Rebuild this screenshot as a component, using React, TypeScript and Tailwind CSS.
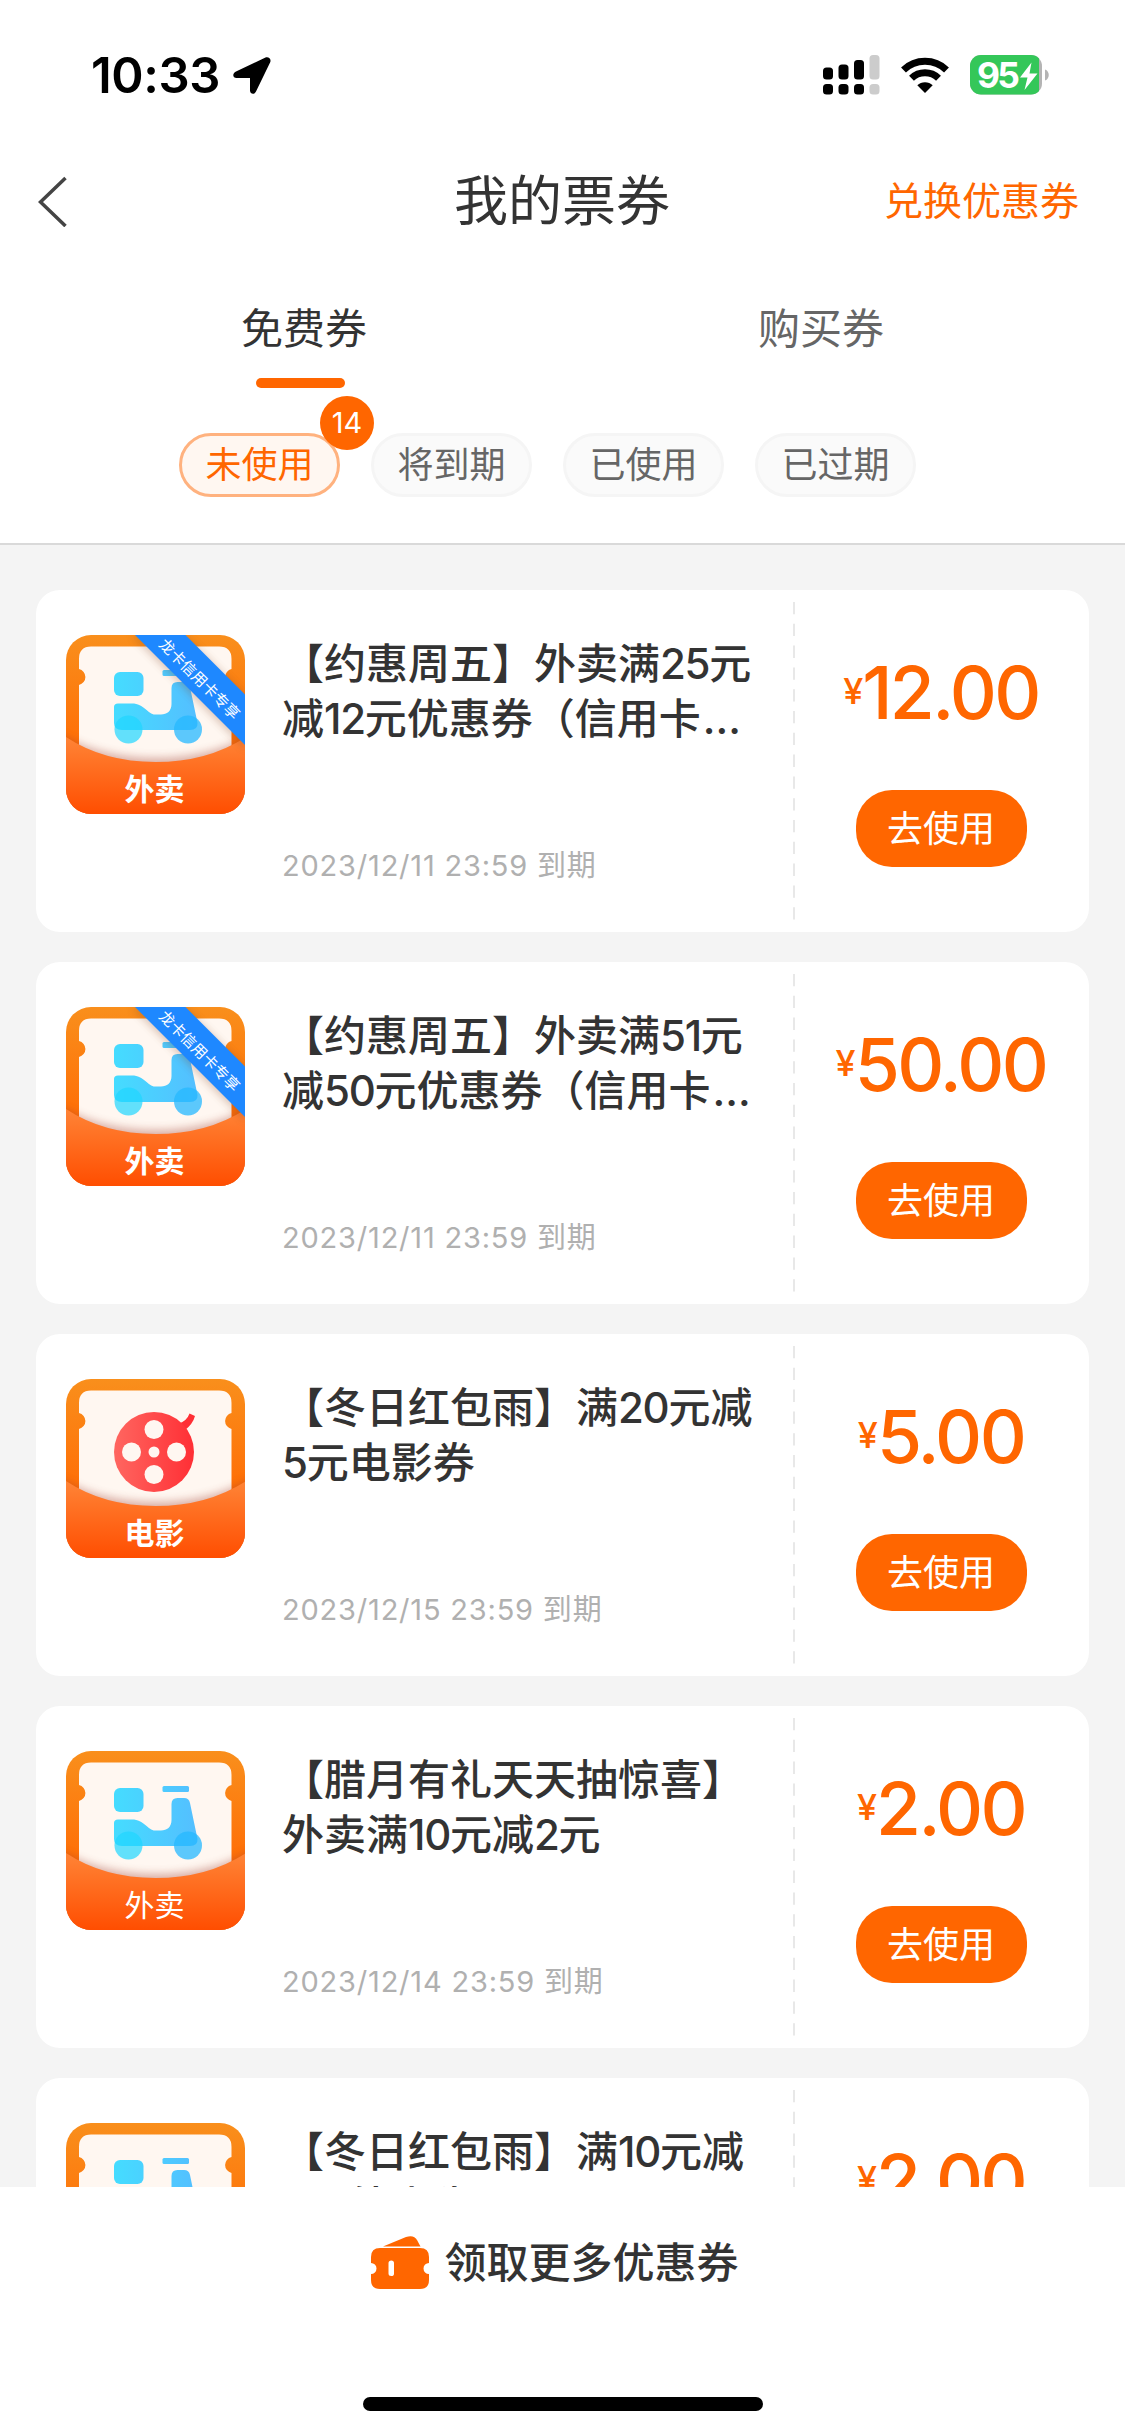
type Coupon = {
  title: [string, string];
  expires: string;
  price: string;
  kind: "takeout" | "movie";
  label: string;
  ribbon?: string;
  boldLabel?: boolean;
};

const coupons: Coupon[] = [
  {
    title: ["【约惠周五】外卖满25元", "减12元优惠券（信用卡…"],
    expires: "2023/12/11 23:59 到期",
    price: "12.00",
    kind: "takeout",
    label: "外卖",
    ribbon: "龙卡信用卡专享",
    boldLabel: true,
  },
  {
    title: ["【约惠周五】外卖满51元", "减50元优惠券（信用卡…"],
    expires: "2023/12/11 23:59 到期",
    price: "50.00",
    kind: "takeout",
    label: "外卖",
    ribbon: "龙卡信用卡专享",
    boldLabel: true,
  },
  {
    title: ["【冬日红包雨】满20元减", "5元电影券"],
    expires: "2023/12/15 23:59 到期",
    price: "5.00",
    kind: "movie",
    label: "电影",
    boldLabel: true,
  },
  {
    title: ["【腊月有礼天天抽惊喜】", "外卖满10元减2元"],
    expires: "2023/12/14 23:59 到期",
    price: "2.00",
    kind: "takeout",
    label: "外卖",
  },
  {
    title: ["【冬日红包雨】满10元减", "2元外卖券"],
    expires: "2023/12/15 23:59 到期",
    price: "2.00",
    kind: "takeout",
    label: "外卖",
  },
];

const filters = ["未使用", "将到期", "已使用", "已过期"];

function StatusBar() {
  return (
    <div className="flex h-[150px] items-center justify-between pr-[76px] pl-[91px]">
      <div className="flex items-center gap-[13px]">
        <span className="text-[49px] leading-none font-semibold tracking-[-0.4px] text-black">
          10:33
        </span>
        <svg width="38" height="37" viewBox="0 0 38 37">
          <path d="M32 .8 3 14.500C-1 16.600-.4 20.800 3.600 21H17V33.500C17.200 37.300 21.500 38 23 34.500L37.200 5.200C38.600 2 35.400-.8 32 .8Z" />
        </svg>
      </div>
      <div className="flex items-center gap-5">
        <svg width="57" height="40" viewBox="0 0 57 40">
          <rect x="0" y="12.500" width="10" height="12" rx="3.500" />
          <rect x="15.500" y="9.500" width="10" height="15" rx="3.500" />
          <rect x="31" y="5" width="10" height="19.500" rx="3.500" />
          <rect x="46.500" y="0" width="10" height="24.500" rx="3.500" fill="#ccc" />
          <rect x="0" y="29" width="10" height="10.500" rx="3.500" />
          <rect x="15.500" y="29" width="10" height="10.500" rx="3.500" />
          <rect x="31" y="29" width="10" height="10.500" rx="3.500" />
          <rect x="46.500" y="29" width="10" height="10.500" rx="3.500" fill="#ccc" />
        </svg>
        <svg width="50" height="36" viewBox="0 0 50 36">
          <path d="M3.500 13A31 31 0 0 1 46.500 13" fill="none" stroke="#000" strokeWidth="7" />
          <path d="M11.500 21.300A19.500 19.500 0 0 1 38.500 21.300" fill="none" stroke="#000" strokeWidth="7" />
          <path d="M25 36 17.300 28.300A11 11 0 0 1 32.700 28.300Z" />
        </svg>
        <svg width="79" height="40" viewBox="0 0 79 40">
          <defs>
            <clipPath id="battery">
              <rect width="72" height="39.500" rx="11" />
            </clipPath>
          </defs>
          <g clipPath="url(#battery)">
            <rect width="72" height="40" fill="#b4b4b4" />
            <rect width="69" height="40" fill="#34c759" />
          </g>
          <path d="M75 14.500C80 16 80 24 75 25.500Z" fill="#b4b4b4" />
          <text x="7" y="32.800" fontSize="35.500" fontWeight="700" textLength="43" fill="#fff">
            95
          </text>
          <path d="M61.500 7.500 50 22.500H57.500L54.500 35 67.500 18.500H59.500Z" fill="#fff" />
        </svg>
      </div>
    </div>
  );
}

function CouponArt({ coupon, id }: { coupon: Coupon; id: string }) {
  return (
    <svg width="180" height="180" viewBox="0 0 180 180" className="shrink-0">
      <defs>
        <linearGradient id={`${id}-frame`} x1="0" y1="0" x2="0" y2="1">
          <stop offset="0" stopColor="#f98f1c" />
          <stop offset="0.650" stopColor="#ff6c05" />
        </linearGradient>
        <linearGradient id={`${id}-pocket`} x1="0" y1="0" x2="0" y2="1">
          <stop offset="0" stopColor="#ff8436" />
          <stop offset="1" stopColor="#ff4d00" />
        </linearGradient>
        <linearGradient id={`${id}-blue`} gradientUnits="userSpaceOnUse" x1="48" y1="0" x2="136" y2="0">
          <stop offset="0" stopColor="#45dcff" />
          <stop offset="1" stopColor="#55bdff" />
        </linearGradient>
        <linearGradient id={`${id}-red`} x1="0" y1="0" x2="1" y2="0">
          <stop offset="0" stopColor="#ff6660" />
          <stop offset="1" stopColor="#ff2f35" />
        </linearGradient>
        <clipPath id={`${id}-clip`}>
          <rect width="179" height="179" rx="25" />
        </clipPath>
        <filter id={`${id}-soft`} x="-10%" y="-20%" width="120%" height="140%">
          <feGaussianBlur stdDeviation="4" />
        </filter>
      </defs>
      <g clipPath={`url(#${id}-clip)`}>
        <rect width="180" height="180" fill={`url(#${id}-frame)`} />
        <path
          d="M25 11.500H153Q165.500 11.500 165.500 24V34A8.200 8.200 0 0 0 165.500 50V135H13V50A8.200 8.200 0 0 0 13 34V24Q13 11.500 25 11.500Z"
          fill="#fff7f1"
        />
        {coupon.kind === "takeout" ? (
          <g fill={`url(#${id}-blue)`}>
            <rect x="48" y="37" width="29.500" height="24" rx="6" />
            <rect x="96.500" y="35" width="26.500" height="6" rx="1.500" />
            <path d="M48 72Q48 68.500 52 68.500H66C78 68.500 82 79.500 89 79.500H95C101 79.500 105.500 76 105.500 69V53Q105.500 47 111.500 47H118Q123 47 124 52L131.500 88Q132 95 124 95H56Q48 95 48 88Z" />
            <circle cx="62.500" cy="94.500" r="14" fill="#1fd5ff" fillOpacity="0.700" />
            <circle cx="122" cy="94.500" r="14" fill="#25b8ff" fillOpacity="0.750" />
          </g>
        ) : (
          <g>
            <path d="M112 45Q121 42 123.500 34.500L129 37Q127 45 118 52Z" fill="#ff2f35" />
            <circle cx="88" cy="73" r="40" fill={`url(#${id}-red)`} />
            <g fill="#fff7f1">
              <circle cx="88" cy="50.500" r="9.500" />
              <circle cx="65.500" cy="73" r="9.500" />
              <circle cx="110.500" cy="73" r="9.500" />
              <circle cx="88" cy="95.500" r="9.500" />
              <circle cx="88" cy="73" r="5.500" />
            </g>
          </g>
        )}
        <path
          d="M-6 99Q35 123 89.500 123T186 99V190H-6Z"
          fill="#a04030"
          opacity="0.400"
          filter={`url(#${id}-soft)`}
        />
        <path d="M0 102Q38 127 89.500 127T180 102V180H0Z" fill={`url(#${id}-pocket)`} />
        <text
          x="88.500"
          y="164.500"
          textAnchor="middle"
          fontSize="30"
          fontWeight={coupon.boldLabel ? 600 : 400}
          fill="#fff"
        >
          {coupon.label}
        </text>
        {coupon.ribbon && (
          <g>
            <path d="M66 0H118L180 62V114Z" fill="#7a4020" opacity="0.300" filter={`url(#${id}-soft)`} />
            <path d="M69 0H119.500L180 60.500V111Z" fill="#1e88ff" />
            <text
              transform="translate(133.500 44) rotate(45)"
              textAnchor="middle"
              dominantBaseline="central"
              fontSize="15.200"
              fill="#fff"
            >
              {coupon.ribbon}
            </text>
          </g>
        )}
      </g>
    </svg>
  );
}

// Latin digits sit a little tighter than the surrounding Chinese text.
function TitleLine({ text }: { text: string }) {
  return (
    <span className="block">
      {text.split(/(\d+|…)/).map((part, index) => {
        if (part === "…") {
          return (
            <span key={index} className="ml-[2px]">
              {part}
            </span>
          );
        }
        return /^\d+$/.test(part) ? (
          <span key={index} className="tracking-[-1.3px]">
            {part}
          </span>
        ) : (
          part
        );
      })}
    </span>
  );
}

function CouponCard({ coupon, id }: { coupon: Coupon; id: string }) {
  return (
    <article className="flex h-[342px] shrink-0 rounded-[24px] bg-white">
      <div className="flex flex-1 pt-[45px] pl-[30px]">
        <CouponArt coupon={coupon} id={id} />
        <div className="ml-[36px] flex flex-col pt-px">
          <h2 className="text-[42px] leading-[55px] font-medium whitespace-nowrap text-[#333]">
            <TitleLine text={coupon.title[0]} />
            <TitleLine text={coupon.title[1]} />
          </h2>
          <p className="mt-[97px] text-[29px] leading-[46px] tracking-[0.800px] text-[#b0b0b0]">
            {coupon.expires}
          </p>
        </div>
      </div>
      <svg width="2" height="318" viewBox="0 0 2 318" className="mt-3 shrink-0">
        <path d="M1 0V318" stroke="#e8e8e8" strokeWidth="2" strokeDasharray="12.300 9.500" />
      </svg>
      <div className="flex w-[294px] flex-col items-center pr-[2px]">
        <div className="mt-[63px] flex h-[80px] items-start pr-[2px] font-medium text-[#ff6600]">
          <span className="mt-[16px] text-[36px] leading-[44px] tracking-[-1px]">¥</span>
          <span className="-mr-[2px] text-[73px] leading-[80px] tracking-[-2.600px]">
            {coupon.price}
          </span>
        </div>
        <button
          type="button"
          className="mt-[57px] h-[77px] w-[171px] rounded-[36px] bg-[#ff6600] text-[36px] leading-none text-white"
        >
          去使用
        </button>
      </div>
    </article>
  );
}

export default function App() {
  return (
    <main className="flex h-[2435px] w-[1125px] flex-col overflow-hidden bg-white font-['Inter','Noto_Sans_CJK_SC',sans-serif]">
      <StatusBar />

      <header className="grid h-[102px] grid-cols-3 items-center px-[46px] pl-[38px]">
        <svg width="30" height="52" viewBox="0 0 30 52">
          <path d="M27.500 3 2.500 27 27.500 51" fill="none" stroke="#444" strokeWidth="3.500" />
        </svg>
        <h1 className="pt-[2px] pl-[7px] text-center text-[54px] leading-none text-[#333]">我的票券</h1>
        <a className="pb-[2px] text-right text-[39px] leading-none text-[#ff6600]">兑换优惠券</a>
      </header>

      <nav className="flex h-[136px] justify-center gap-[391px] pt-[49px] text-[42px] leading-[56px]">
        <div className="flex flex-col items-start text-[#333]">
          免费券
          <span className="mt-[21px] ml-[15px] h-[10px] w-[89px] rounded-full bg-[#ff6600]" />
        </div>
        <div className="text-[#666]">购买券</div>
      </nav>

      <div className="flex h-[157px] shrink-0 justify-center gap-[31px] border-b-2 border-[#d9d9d9] pt-[45px] pr-[30px]">
        {filters.map((name, index) => (
          <div
            key={name}
            className={
              index === 0
                ? "relative flex h-[64px] w-[161px] items-center justify-center rounded-full border-[3px] border-[#ffb27f] bg-[#fff7f1] pb-px text-[36px] text-[#ff6600]"
                : "flex h-[64px] w-[161px] items-center justify-center rounded-full border-[3px] border-[#f5f5f5] bg-[#fafafa] pb-px text-[36px] text-[#666]"
            }
          >
            {name}
            {index === 0 && (
              <span className="absolute -top-[40px] left-[138px] flex size-[54px] items-center justify-center rounded-full bg-[#ff6600] text-[29px] text-white">
                14
              </span>
            )}
          </div>
        ))}
      </div>

      <section className="flex min-h-0 flex-1 flex-col gap-[30px] overflow-hidden bg-[#f4f4f4] px-[36px] pt-[45px]">
        {coupons.map((coupon, index) => (
          <CouponCard key={index} coupon={coupon} id={`coupon-${index}`} />
        ))}
      </section>

      <footer className="flex h-[248px] shrink-0 flex-col items-center bg-white">
        <div className="mt-[46px] flex h-[60px] items-center gap-[15px] pr-[15px]">
          <svg width="58" height="54" viewBox="0 0 58 54" fill="#ff6600">
            <path d="M12 10.500 35 1Q43-1.500 46 4L49.500 10.500Z" />
            <path
              fillRule="evenodd"
              d="M9 12H49Q58 12 58 21V27A5.500 5.500 0 0 0 58 38V44Q58 53 49 53H9Q0 53 0 44V38A5.500 5.500 0 0 0 0 27V21Q0 12 9 12ZM17.500 27V37.500Q17.500 40 20.300 40T23 37.500V27Q23 24.500 20.300 24.500T17.500 27Z"
            />
          </svg>
          <span className="text-[42px] leading-none font-medium text-[#333]">领取更多优惠券</span>
        </div>
        <div className="mt-[104px] h-[14px] w-[400px] rounded-full bg-black" />
      </footer>
    </main>
  );
}
